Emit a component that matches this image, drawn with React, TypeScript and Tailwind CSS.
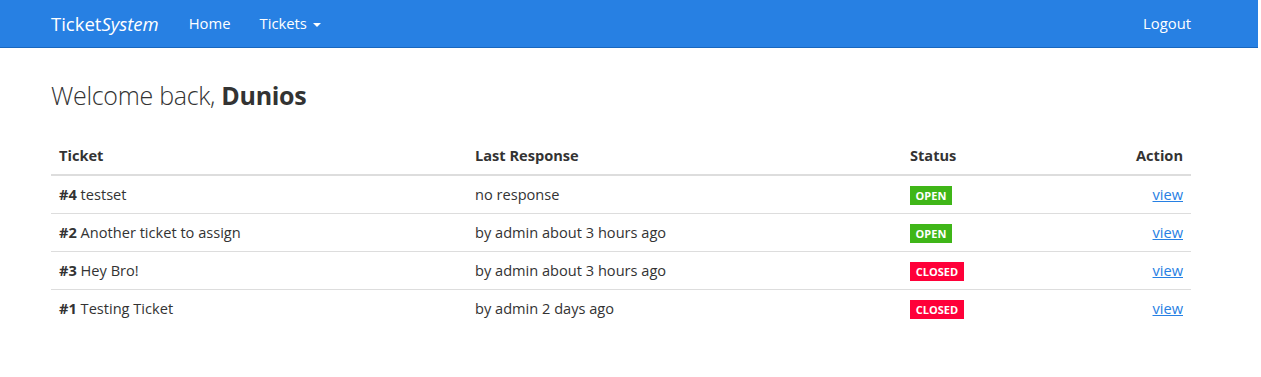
const tickets = [
  { id: 4, title: "testset", response: "no response", status: "open" },
  { id: 2, title: "Another ticket to assign", response: "by admin about 3 hours ago", status: "open" },
  { id: 3, title: "Hey Bro!", response: "by admin about 3 hours ago", status: "closed" },
  { id: 1, title: "Testing Ticket", response: "by admin 2 days ago", status: "closed" },
];

function StatusLabel({ status }: { status: string }) {
  if (status === "open") {
    return (
      <span className="inline-flex h-[19px] w-[42px] items-center justify-center bg-[#3fb618] text-[11px] font-bold leading-none text-white">
        OPEN
      </span>
    );
  }
  return (
    <span className="inline-flex h-[19px] w-[54px] items-center justify-center bg-[#ff0039] text-[11px] font-bold leading-none text-white">
      CLOSED
    </span>
  );
}

export default function App() {
  return (
    <div className="min-h-screen bg-white font-['Open_Sans',sans-serif] text-[14.6px] text-[#333]">
      <nav className="h-[48px] w-[1258px] border-b border-[#1967be] bg-[#2780e3] text-[14.8px] text-white">
        <div className="flex h-full w-[1191px] items-center pl-[51px]">
          <a href="#" className="text-[18.5px]">
            Ticket<em>System</em>
          </a>
          <a href="#" className="ml-[30px]">Home</a>
          <a href="#" className="ml-[29px] flex items-center gap-[6px]">
            Tickets
            <span className="mt-[2px] h-0 w-0 border-x-[4px] border-t-[4px] border-x-transparent border-t-white" />
          </a>
          <a href="#" className="ml-auto">Logout</a>
        </div>
      </nav>

      <main className="w-[1191px] pl-[51px]">
        <h3 className="mt-[29px] text-[25px] font-light leading-[36px] tracking-[-0.3px] text-[#333]">
          Welcome back, <span className="font-bold">Dunios</span>
        </h3>

        <table className="mt-[24px] w-full border-collapse">
          <thead>
            <tr className="border-b-2 border-[#ddd] text-left font-bold">
              <th className="w-[416px] px-[8px] py-[8px] leading-[21px]">Ticket</th>
              <th className="w-[435px] px-[8px] py-[8px] leading-[21px]">Last Response</th>
              <th className="px-[8px] py-[8px] leading-[21px]">Status</th>
              <th className="px-[8px] py-[8px] text-right leading-[21px]">Action</th>
            </tr>
          </thead>
          <tbody>
            {tickets.map((t, i) => (
              <tr key={t.id} className={i < tickets.length - 1 ? "border-b border-[#ddd]" : ""}>
                <td className="px-[8px] py-[8px] leading-[21px]">
                  <span className="font-bold">#{t.id}</span> {t.title}
                </td>
                <td className="px-[8px] py-[8px] leading-[21px]">{t.response}</td>
                <td className="px-[8px] py-[8px] leading-[21px]">
                  <StatusLabel status={t.status} />
                </td>
                <td className="px-[8px] py-[8px] text-right leading-[21px]">
                  <a href="#" className="text-[#2780e3] underline">view</a>
                </td>
              </tr>
            ))}
          </tbody>
        </table>
      </main>
    </div>
  );
}
